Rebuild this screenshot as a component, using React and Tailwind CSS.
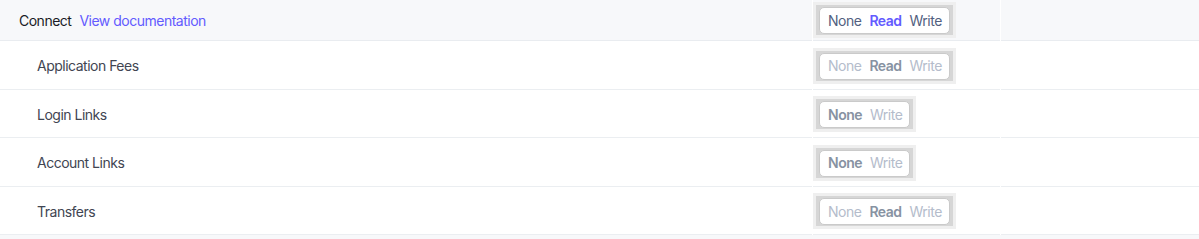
import React from 'react';

const rows = [
  { label: 'Application Fees', options: ['None', 'Read', 'Write'], selected: 'Read' },
  { label: 'Login Links', options: ['None', 'Write'], selected: 'None' },
  { label: 'Account Links', options: ['None', 'Write'], selected: 'None' },
  { label: 'Transfers', options: ['None', 'Read', 'Write'], selected: 'Read' },
];

function Segmented({ options, selected, disabled }) {
  return (
    <div className="bg-[#efefef] p-[3px]">
      <div className="bg-[#d6d6d6] px-[3px] pt-[2px] pb-[1px]">
        <div className="h-[27px] bg-white rounded-[5px] border border-[#cacaca] flex items-center gap-2 pl-2 pr-[7px]">
          {options.map((opt) => {
            const active = opt === selected;
            let cls = 'text-[#525f7f]';
            if (disabled) cls = active ? 'text-[#8792a2] font-semibold' : 'text-[#b4bccb]';
            else if (active) cls = 'text-[#635bff] font-semibold';
            return (
              <span key={opt} className={`text-[14px] leading-none tracking-[-0.5px] ${cls}`}>
                {opt}
              </span>
            );
          })}
        </div>
      </div>
    </div>
  );
}

export default function App() {
  return (
    <div className="w-[1199px] h-[239px] bg-white font-['Inter','Liberation_Sans',sans-serif] overflow-hidden">
      <div className="flex h-[41px] gap-px">
        <div className="w-[812px] bg-[#f7f8fa] border-b border-[#e9ecf0] flex items-center pl-[19px] gap-2 text-[14px] tracking-[-0.5px]">
          <span className="text-[#1a1b25]">Connect</span>
          <span className="text-[#635bff]">View documentation</span>
        </div>
        <div className="w-[187px] bg-[#f7f8fa] border-b border-[#e9ecf0] flex items-center">
          <Segmented options={['None', 'Read', 'Write']} selected="Read" />
        </div>
        <div className="flex-1 bg-[#f7f8fa] border-b border-[#e9ecf0]" />
      </div>
      {rows.map((row) => (
        <div key={row.label} className="flex h-[48.5px] gap-px">
          <div className="w-[812px] border-b border-[#ebeef1] flex items-center pt-[2px] pl-[37px] text-[14px] tracking-[-0.5px] text-[#414552]">
            {row.label}
          </div>
          <div className="w-[187px] border-b border-[#ebeef1] flex items-center pt-[2px]">
            <Segmented options={row.options} selected={row.selected} disabled />
          </div>
          <div className="flex-1 border-b border-[#ebeef1]" />
        </div>
      ))}
      <div className="h-[4px] bg-[#f7f8fa]" />
    </div>
  );
}
